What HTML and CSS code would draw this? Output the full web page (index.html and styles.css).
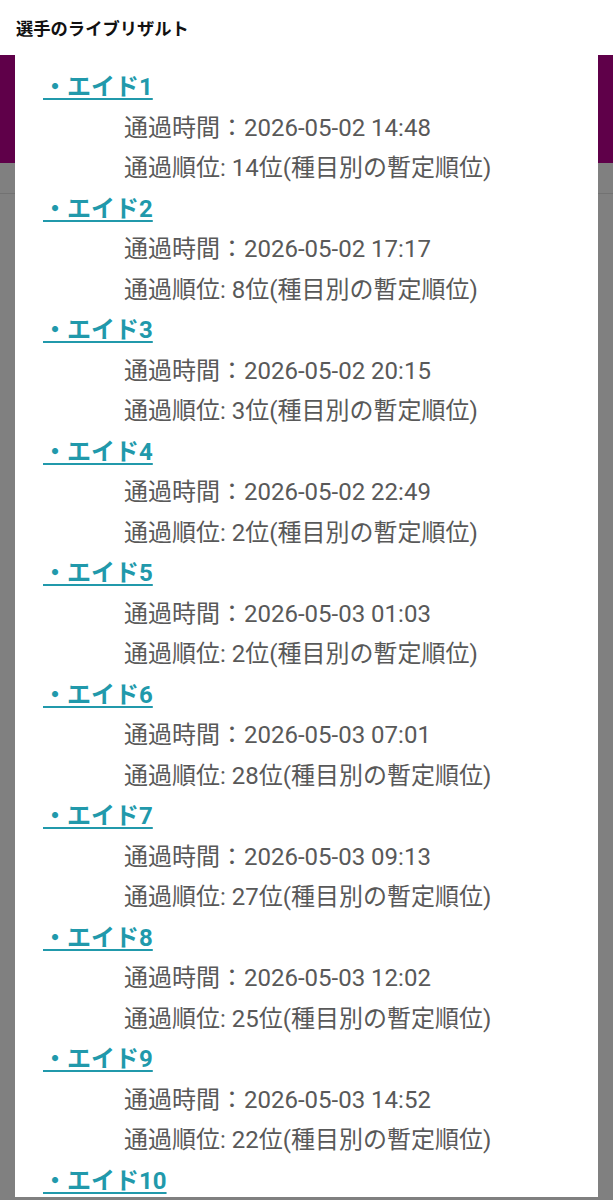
FILE: index.html
```html
<!DOCTYPE html>
<html lang="ja">
<head>
    <meta charset="UTF-8">
    <meta name="viewport" content="width=device-width, initial-scale=1.0">
    <title>選手のライブリザルト</title>
    <link rel="stylesheet" href="styles.css">
</head>
<body>

<!-- Sheet title bar -->
<div class="sheet-title">選手のライブリザルト</div>

<!-- Dimmed page behind the dialog -->
<div class="stage">
    <div class="page-bar"></div>
    <div class="page-tabs"></div>

    <!-- Aid station results -->
    <div class="dialog">
        <div class="aid">
            <a class="aid-name" href="#">・エイド1</a>
            <div class="aid-line">通過時間：2026-05-02 14:48</div>
            <div class="aid-line">通過順位: 14位(種目別の暫定順位)</div>
        </div>
        <div class="aid">
            <a class="aid-name" href="#">・エイド2</a>
            <div class="aid-line">通過時間：2026-05-02 17:17</div>
            <div class="aid-line">通過順位: 8位(種目別の暫定順位)</div>
        </div>
        <div class="aid">
            <a class="aid-name" href="#">・エイド3</a>
            <div class="aid-line">通過時間：2026-05-02 20:15</div>
            <div class="aid-line">通過順位: 3位(種目別の暫定順位)</div>
        </div>
        <div class="aid">
            <a class="aid-name" href="#">・エイド4</a>
            <div class="aid-line">通過時間：2026-05-02 22:49</div>
            <div class="aid-line">通過順位: 2位(種目別の暫定順位)</div>
        </div>
        <div class="aid">
            <a class="aid-name" href="#">・エイド5</a>
            <div class="aid-line">通過時間：2026-05-03 01:03</div>
            <div class="aid-line">通過順位: 2位(種目別の暫定順位)</div>
        </div>
        <div class="aid">
            <a class="aid-name" href="#">・エイド6</a>
            <div class="aid-line">通過時間：2026-05-03 07:01</div>
            <div class="aid-line">通過順位: 28位(種目別の暫定順位)</div>
        </div>
        <div class="aid">
            <a class="aid-name" href="#">・エイド7</a>
            <div class="aid-line">通過時間：2026-05-03 09:13</div>
            <div class="aid-line">通過順位: 27位(種目別の暫定順位)</div>
        </div>
        <div class="aid">
            <a class="aid-name" href="#">・エイド8</a>
            <div class="aid-line">通過時間：2026-05-03 12:02</div>
            <div class="aid-line">通過順位: 25位(種目別の暫定順位)</div>
        </div>
        <div class="aid">
            <a class="aid-name" href="#">・エイド9</a>
            <div class="aid-line">通過時間：2026-05-03 14:52</div>
            <div class="aid-line">通過順位: 22位(種目別の暫定順位)</div>
        </div>
        <div class="aid">
            <a class="aid-name" href="#">・エイド10</a>
        </div>
    </div>
</div>

</body>
</html>
```

FILE: styles.css
```css
body {
    font-family: Roboto, "Noto Sans CJK JP", sans-serif;
    background-color: #808080;
    margin: 0;
    padding: 0;
    height: 100vh;
    display: flex;
    flex-direction: column;
    overflow: hidden;
}

/* Title bar */
.sheet-title {
    height: 55px;
    flex-shrink: 0;
    display: flex;
    align-items: center;
    padding-left: 16px;
    background-color: #fff;
    color: #111;
    font-size: 17.3px;
    font-weight: bold;
}

/* Page behind the dialog (already dimmed) */
.stage {
    position: relative;
    flex-grow: 1;
}

.page-bar {
    height: 108px;
    background-color: #5f0049; /* dimmed brand purple */
}

.page-tabs {
    height: 30px;
    border-bottom: 1px solid #727272;
}

/* Dialog */
.dialog {
    position: absolute;
    top: 0;
    left: 15px;
    right: 15px;
    bottom: 3px;
    overflow: hidden;
    background-color: #fff;
    padding: 12px 0 0 28px;
    font-size: 24px;
    line-height: 40.5px;
}

.aid-name {
    display: inline-block;
    color: #2199ab;
    font-weight: bold;
    text-decoration: underline;
    text-decoration-thickness: 2px;
    text-underline-offset: 3px;
}

.aid-line {
    padding-left: 81px;
    color: #595959;
}
```
